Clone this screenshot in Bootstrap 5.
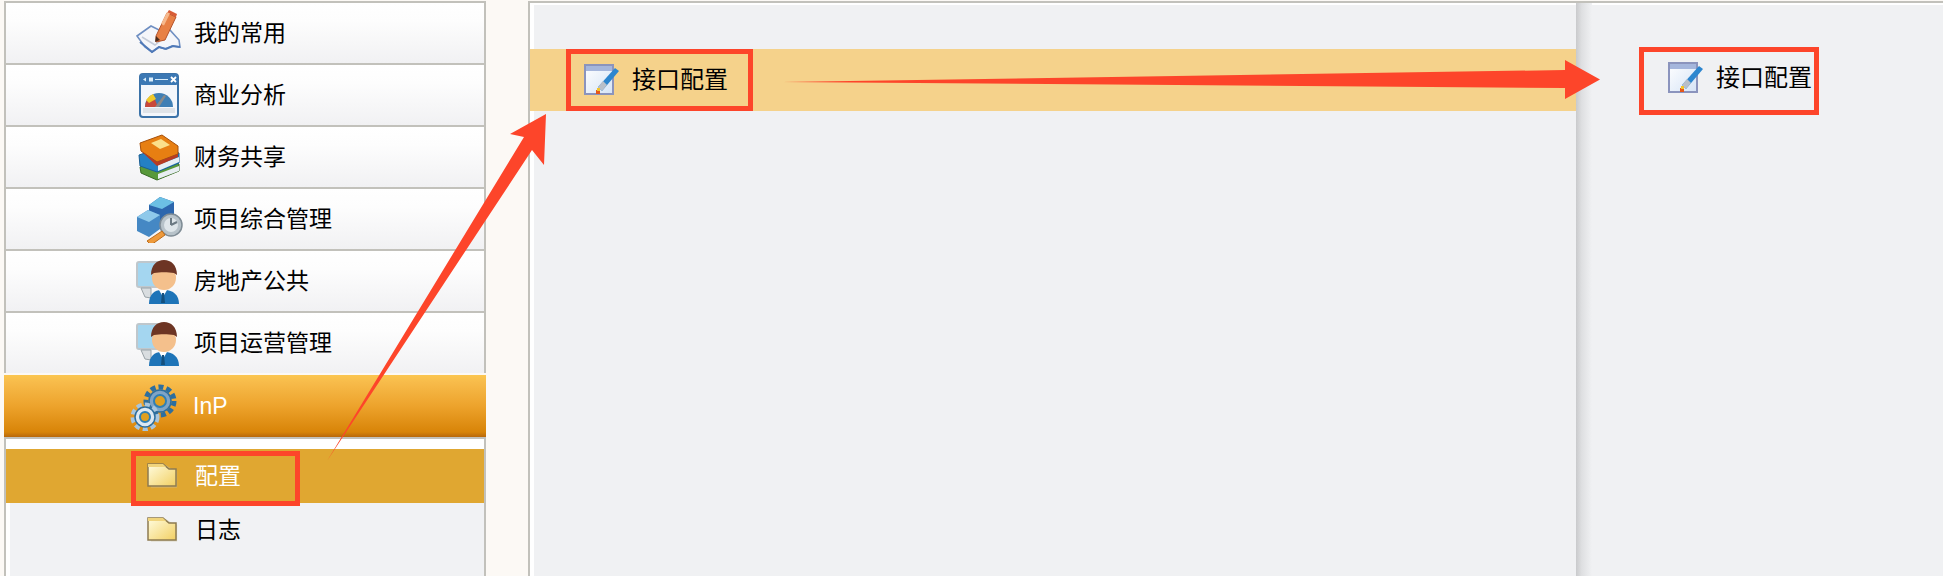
<!DOCTYPE html>
<html lang="zh">
<head>
<meta charset="utf-8">
<title>接口配置</title>
<link href="https://cdn.jsdelivr.net/npm/bootstrap@5.3.0/dist/css/bootstrap.min.css" rel="stylesheet">
<style>
html,body{height:100%;overflow:hidden}
body{background:#fcf9f5;font-family:"Liberation Sans","Noto Sans CJK SC",sans-serif;color:#000}
.stage{position:relative;width:1943px;height:576px;padding:1px 0 0 4px}
.side{width:482px;flex:none}
.menu-row{height:62px;border:solid #c2c1bb;border-width:2px 2px 0 2px;background:linear-gradient(#fff 0,#fdfdfd 30%,#f1f1f3 100%);margin-left:0}
.menu-row .ico{margin-left:129px;width:48px;height:48px;flex:none}
.menu-row .lbl{margin-left:11px;font-size:23px;line-height:1}
.menu-on{height:62px;margin-top:2px;background:linear-gradient(#fbc64f 0,#f7bb4a 12%,#eda32c 50%,#d88408 92%,#b8680a 100%);color:#fff}
.menu-on .ico{margin-left:125px;width:50px;height:50px;flex:none}
.menu-on .lbl{margin-left:14px;font-size:23px;line-height:1;font-family:"Liberation Sans",sans-serif}
.tree{height:139px;border:solid #c2c1bb;border-width:2px 2px 0 2px;background:#f1f2f4;padding-top:10px;box-shadow:inset 4px 10px 0 #fff}
.tree-row{height:54px;padding-left:141px}
.tree-row .lbl{margin-left:16px;font-size:23px;line-height:1}
.tree-on{background:#e0a731;color:#fff}
.main{width:1048px;flex:none;margin-left:42px;border:solid #c2c1bb;border-width:2px 0 0 2px;background:#f0f1f3;padding-top:46px;box-shadow:inset 4px 2px 0 #fff}
.task-row{height:62px;background:#f5d28b;padding-left:54px}
.task-ico{width:36px;height:32px;flex:none}
.task-lbl{margin-left:12px;font-size:24px;line-height:1}
.far{flex:1 1 auto;border-top:2px solid #c2c1bb;background:#f0f1f3;padding:44px 0 0 84px;position:relative;box-shadow:inset 0 2px 0 #fff}
.far::before{content:"";position:absolute;left:0;top:0;bottom:0;width:16px;background:linear-gradient(90deg,#c9cacc,#dedfe1 35%,#f0f1f3)}
.far-row{height:62px;position:relative}
.marks{position:absolute;left:0;top:0;width:1943px;height:576px;pointer-events:none}
</style>
</head>
<body>
<div class="stage d-flex align-items-start">
  <nav class="side d-flex flex-column">
    <div class="menu-row d-flex align-items-center">
      <svg class="ico" viewBox="0 0 48 48"><path d="M2 27 16 17l10 5 8-2 10 11 1 7-8-1-7 3-6-2-7 5-7-5z" fill="#f5f6fa" stroke="#6f8fc2" stroke-width="1.6"/><path d="M5 33l12 10 7-5 7 2 7-3 7 1" fill="none" stroke="#4f79b8" stroke-width="2"/><path d="M7 28l13 8 5-4" fill="none" stroke="#c4cbd8" stroke-width="1.5"/><path d="M21 27 32 4l9 4-11 23-9 2z" fill="#e88045" stroke="#b4532b" stroke-width="1"/><path d="M32 4l2-3 8 4-1 3z" fill="#d85c36"/><path d="M26 15l6-12 3 1.5-6 12z" fill="#f6b88c"/><path d="M21 27l-1 6 5-2z" fill="#4b2c1c"/></svg>
      <span class="lbl">我的常用</span>
    </div>
    <div class="menu-row d-flex align-items-center">
      <svg class="ico" viewBox="0 0 48 48"><rect x="5" y="3" width="38" height="43" rx="3" fill="#f3f6fb" stroke="#3b72a8" stroke-width="2"/><rect x="5" y="3" width="38" height="11" rx="2" fill="#3b78b4"/><path d="M8 8.500l3-2v4zM14 6.500h4v4h-4zM20 8h13v1H20z" fill="#d8ecfa"/><path d="M36 6l5 5m0-5-5 5" stroke="#fff" stroke-width="1.800"/><path d="M10 36a14 14 0 0 1 28 0z" fill="#3f7fb5"/><path d="M10 36a14 14 0 0 1 8-12l5 12z" fill="#c9483a"/><path d="M11 29a14 14 0 0 1 7-6l3 5-7 4z" fill="#f0c92a"/><path d="M20 36l9-12 2 1-7 11z" fill="#8a8a8a"/><path d="M8 37h32v5H8z" fill="#dfe3e8"/></svg>
      <span class="lbl">商业分析</span>
    </div>
    <div class="menu-row d-flex align-items-center">
      <svg class="ico" viewBox="0 0 48 48"><path d="M5 34 30 26 44 31v7L22 47 6 40z" fill="#58993a" stroke="#386b24"/><path d="M23 41 44 33v5L23 46z" fill="#e8eef2"/><path d="M4 22 28 14 44 20v10L22 39 5 33z" fill="#2480c4" stroke="#1b5f94"/><path d="M23 32 44 24v5L23 38z" fill="#e6eef4"/><path d="M5 10 27 2 43 13v8L22 29 6 18z" fill="#e77f12" stroke="#a6500a"/><path d="M6 18 22 29l21-8v3L22 33z" fill="#b83b22"/><path d="M16 10l10-4 9 6-10 4z" fill="#fbe08a"/></svg>
      <span class="lbl">财务共享</span>
    </div>
    <div class="menu-row d-flex align-items-center">
      <svg class="ico" viewBox="0 0 48 48"><path d="M14 10 25 2l14 5v14l-12 8-13-5z" fill="#2c66ad"/><path d="M14 10 25 2l14 5-12 7z" fill="#6cc0e4"/><path d="M2 22l11-7 12 5v14l-11 8-12-6z" fill="#4588c4"/><path d="M2 22l11-7 12 5-11 7z" fill="#8fc9ea"/><circle cx="36" cy="30" r="11" fill="#b7c2c9" stroke="#7f8c95" stroke-width="1.500"/><circle cx="36" cy="30" r="7" fill="#dfe6ea"/><path d="M36 30l6-3m-6 3V23" stroke="#6c7a83" stroke-width="2"/><path d="M12 46l15-10 3 4-14 10z" fill="#ee9a3c" stroke="#bd6c1b"/></svg>
      <span class="lbl">项目综合管理</span>
    </div>
    <div class="menu-row d-flex align-items-center">
      <svg class="ico" viewBox="0 0 48 48"><use href="#man"/></svg>
      <span class="lbl">房地产公共</span>
    </div>
    <div class="menu-row d-flex align-items-center">
      <svg class="ico" viewBox="0 0 48 48"><use href="#man"/></svg>
      <span class="lbl">项目运营管理</span>
    </div>
    <div class="menu-on d-flex align-items-center">
      <svg class="ico" viewBox="0 0 50 50"><use href="#gears"/></svg>
      <span class="lbl">InP</span>
    </div>
    <div class="tree">
      <div class="tree-row tree-on d-flex align-items-center">
        <svg width="32" height="28" viewBox="0 0 32 28" class="flex-none"><use href="#folder"/></svg>
        <span class="lbl">配置</span>
      </div>
      <div class="tree-row d-flex align-items-center">
        <svg width="32" height="28" viewBox="0 0 32 28" class="flex-none"><use href="#folder"/></svg>
        <span class="lbl">日志</span>
      </div>
    </div>
  </nav>
  <main class="main align-self-stretch">
    <div class="task-row d-flex align-items-center">
      <svg class="task-ico" viewBox="0 0 36 32"><use href="#edit"/></svg>
      <span class="task-lbl">接口配置</span>
    </div>
  </main>
  <section class="far align-self-stretch">
    <div class="far-row d-flex align-items-center ps-2">
      <svg class="task-ico" viewBox="0 0 36 32"><use href="#edit"/></svg>
      <span class="task-lbl">接口配置</span>
    </div>
  </section>
  <svg class="marks" viewBox="0 0 1943 576">
    <g fill="none" stroke="#fd452a" stroke-width="5">
      <rect x="133.500" y="453.500" width="164" height="50"/>
      <rect x="568.500" y="51.500" width="182" height="57"/>
      <rect x="1641.500" y="49.500" width="175" height="63"/>
    </g>
    <polygon fill="#fd452a" points="327,461 524,137 510,134 546,114 544,165 532,150" />
    <polygon fill="#fd452a" points="783,82 1565,70 1565,60 1600,79.500 1565,99 1565,88"/>
  </svg>
</div>
<svg width="0" height="0" class="position-absolute">
  <defs>
    <linearGradient id="fg" x1="0" y1="0" x2="1" y2="1"><stop offset="0" stop-color="#fffde0"/><stop offset="1" stop-color="#f2cf62"/></linearGradient>
    <linearGradient id="eg" x1="0" y1="0" x2="1" y2="1"><stop offset="0" stop-color="#fff"/><stop offset="1" stop-color="#d5e3f6"/></linearGradient>
    <symbol id="folder" viewBox="0 0 32 28">
      <path d="M3 4h16l8 6h3v20H3z" transform="translate(1 0) scale(.97 .85)" fill="#cfc6a6" opacity=".6"/>
      <path d="M1 2h15l6 5h7v17H1z" fill="url(#fg)" stroke="#8d7b50" stroke-width="1.500"/>
      <path d="M1 2h15l3 3H1z" fill="#f0d47c"/>
    </symbol>
    <symbol id="edit" viewBox="0 0 36 32">
      <rect x="1" y="1" width="28" height="29" fill="url(#eg)" stroke="#8b94bd" stroke-width="2"/>
      <rect x="2" y="2" width="26" height="5" fill="#a5b6dc"/>
      <path d="M14 23 31 4l4 3-17 20z" fill="#2d86cf"/>
      <path d="M14 23l5-6 4 4-5 6z" fill="#b9bfc9"/>
      <path d="M12 26h4v4h-4z" fill="#e5571b"/>
      <path d="M13 24h3v3h-3z" fill="#f4c42b"/>
    </symbol>
    <symbol id="man" viewBox="0 0 48 48">
      <rect x="2" y="5" width="26" height="25" rx="2" fill="#a4d6f0" stroke="#bfc7cc" stroke-width="2"/>
      <path d="M6 31h10v10l-6-1z" fill="#d9dde0" stroke="#9aa3a8"/>
      <path d="M14 47c0-10 6-14 12-14h4c8 0 14 5 14 14z" fill="#1e74b8"/>
      <path d="M24 33l4 7 4-7z" fill="#fff"/><path d="M27 36h2l1 10h-4z" fill="#14507e"/>
      <circle cx="29" cy="21" r="12" fill="#f4c08c"/>
      <path d="M16 18c0-10 6-15 13-15s13 5 13 15l-3-2c-6-1-14-1-20 0z" fill="#6d3524"/>
    </symbol>
    <symbol id="gears" viewBox="0 0 50 50">
      <g fill="#7fa4c6" stroke="#2d6e9e" stroke-width="1.500">
        <circle cx="31" cy="20" r="14" stroke-width="5" fill="none" stroke-dasharray="5 3"/>
        <circle cx="31" cy="20" r="11"/>
      </g>
      <circle cx="31" cy="20" r="6" fill="#e0a020" stroke="#2f7fb4" stroke-width="2"/>
      <circle cx="16" cy="36" r="12" fill="none" stroke="#a8c6de" stroke-width="5" stroke-dasharray="5 3"/>
      <circle cx="16" cy="36" r="10" fill="#dce8f2" stroke="#2d6e9e" stroke-width="1.500"/>
      <circle cx="16" cy="36" r="5" fill="#e0a020" stroke="#2f7fb4" stroke-width="2"/>
    </symbol>
  </defs>
</svg>
</body>
</html>
